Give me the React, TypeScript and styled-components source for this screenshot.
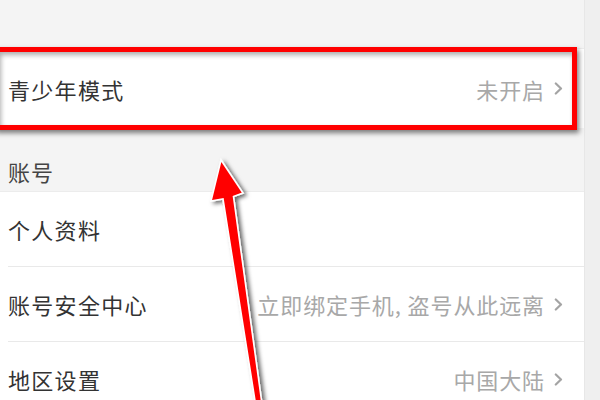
import styled, { createGlobalStyle } from 'styled-components'

const GlobalStyle = createGlobalStyle`
  html, body {
    margin: 0;
    padding: 0;
    background: #f4f4f4;
  }
  body {
    font-family: "Noto Sans CJK SC", "Noto Sans", sans-serif;
  }
`

type Item = { label: string; value?: string; arrow?: boolean }

const accountItems: Item[] = [
  { label: '个人资料' },
  { label: '账号安全中心', value: '立即绑定手机, 盗号从此远离', arrow: true },
  { label: '地区设置', value: '中国大陆', arrow: true },
]

const Chevron = () => (
  <ChevronSvg viewBox="0 0 9 13" width="9" height="13">
    <path d="M1.8 1.5 L7 6.5 L1.8 11.5" fill="none" stroke="#a4a4a4" strokeWidth="2.2" strokeLinecap="round" strokeLinejoin="round" />
  </ChevronSvg>
)

const Arrow = () => (
  <ArrowSvg width="600" height="400" viewBox="0 0 600 400">
    <defs>
      <filter id="arrowShadow" x="-50%" y="-20%" width="200%" height="140%">
        <feDropShadow dx="3" dy="2" stdDeviation="2.2" floodColor="#000" floodOpacity="0.6" />
      </filter>
    </defs>
    <polygon
      points="221,160 243,193 233.5,196.5 262,404 255.5,404 223,199 211,201"
      fill="#ff0000"
      stroke="#ffffff"
      strokeWidth="1.6"
      strokeLinejoin="miter"
      filter="url(#arrowShadow)"
    />
  </ArrowSvg>
)

export default function App() {
  return (
    <>
      <GlobalStyle />
      <Page>
        <Main>
          <TopGap />
          <HighlightRow>
            <Label>青少年模式</Label>
            <Value>未开启</Value>
            <Chevron />
            <RedFrame />
          </HighlightRow>
          <SectionTitle>账号</SectionTitle>
          <List>
            {accountItems.map((item) => (
              <Row key={item.label}>
                <Label>{item.label}</Label>
                {item.value && <Value>{item.value}</Value>}
                {item.arrow && <Chevron />}
              </Row>
            ))}
          </List>
        </Main>
        <ScrollStrip />
        <Arrow />
      </Page>
    </>
  )
}

const Page = styled.div`
  position: relative;
  width: 600px;
  height: 400px;
  overflow: hidden;
  display: flex;
  background: #f4f4f4;
`

const Main = styled.div`
  width: 584px;
  display: flex;
  flex-direction: column;
  & > * {
    flex-shrink: 0;
  }
`

const ScrollStrip = styled.div`
  flex: 1;
  background: #efefef;
  border-left: 1px solid #e7e7e7;
`

const TopGap = styled.div`
  height: 48px;
  border-bottom: 1px solid #ececec;
`

const BaseRow = styled.div`
  display: flex;
  align-items: center;
  padding: 0 21px 0 8px;
  background: #ffffff;
`

const HighlightRow = styled(BaseRow)`
  position: relative;
  height: 79px;
`

const RedFrame = styled.div`
  position: absolute;
  left: -6px;
  top: -2px;
  right: 7px;
  bottom: -2px;
  border: 5px solid #ff0000;
  box-shadow: 2px 3px 5px rgba(0, 0, 0, 0.5), inset 2px 3px 5px rgba(0, 0, 0, 0.32);
  pointer-events: none;
`

const SectionTitle = styled.div`
  height: 64px;
  box-sizing: border-box;
  display: flex;
  align-items: flex-end;
  padding: 0 0 7px 8px;
  font-size: 22px;
  line-height: 26px;
  letter-spacing: 1px;
  color: #444;
  border-bottom: 1px solid #ececec;
`

const List = styled.div`
  display: flex;
  flex-direction: column;
  background: #ffffff;
`

const Row = styled(BaseRow)`
  height: 74px;
  flex-shrink: 0;
  & + & {
    border-top: 1px solid #e9e9e9;
    margin-left: 8px;
    padding-left: 0;
  }
`

const Label = styled.span`
  flex: 1;
  font-size: 22px;
  letter-spacing: 1.3px;
  color: #333;
  white-space: nowrap;
`

const Value = styled.span`
  font-size: 22px;
  letter-spacing: 0.9px;
  color: #a8a8a8;
  white-space: nowrap;
  margin-right: 9px;
`

const ChevronSvg = styled.svg`
  flex-shrink: 0;
  display: block;
`

const ArrowSvg = styled.svg`
  position: absolute;
  left: 0;
  top: 0;
  pointer-events: none;
`
